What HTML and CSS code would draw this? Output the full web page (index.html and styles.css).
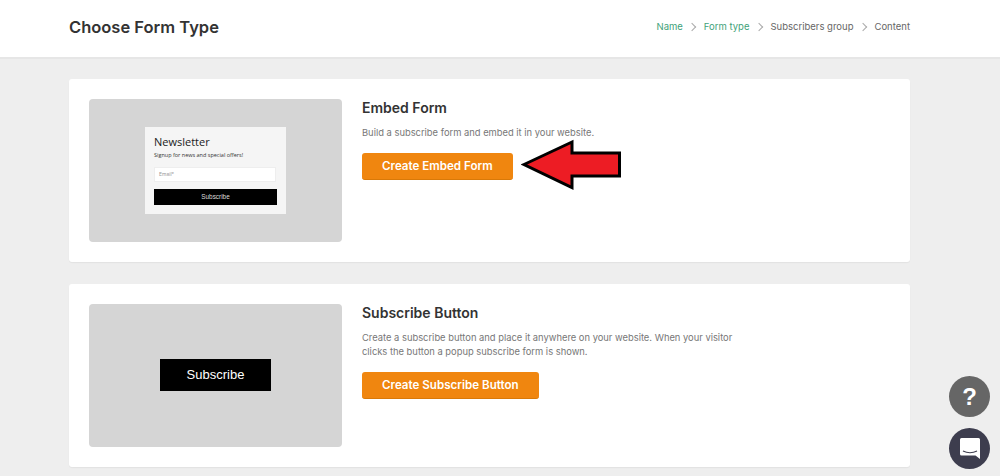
FILE: index.html
```html
<!DOCTYPE html>
<html lang="en">
<head>
<meta charset="utf-8">
<title>Choose Form Type</title>
<link rel="stylesheet" href="styles.css">
</head>
<body>
<header class="header">
  <div class="wrap header-row">
    <h1 class="page-title">Choose Form Type</h1>
    <nav class="steps">
      <span class="step done">Name</span><span class="sep"></span>
      <span class="step done">Form type</span><span class="sep"></span>
      <span class="step">Subscribers group</span><span class="sep"></span>
      <span class="step">Content</span>
    </nav>
  </div>
</header>
<main class="wrap cards">
  <section class="card">
    <div class="thumb">
      <div class="mini-form">
        <div class="mini-title">Newsletter</div>
        <div class="mini-sub">Signup for news and special offers!</div>
        <div class="mini-input">Email*</div>
        <div class="mini-btn">Subscribe</div>
      </div>
    </div>
    <div class="info">
      <h2 class="card-title">Embed Form</h2>
      <p class="card-text">Build a subscribe form and embed it in your website.</p>
      <a class="cta">Create Embed Form</a>
    </div>
    <svg class="arrow" width="101" height="52" viewBox="0 0 101 52"><path d="M3 25.500 L51 3 V14 H98.500 V37 H51 V48.500 Z" fill="#ed1c24" stroke="#000" stroke-width="3"/></svg>
  </section>
  <section class="card">
    <div class="thumb">
      <div class="sub-btn">Subscribe</div>
    </div>
    <div class="info">
      <h2 class="card-title">Subscribe Button</h2>
      <p class="card-text">Create a subscribe button and place it anywhere on your website. When your visitor<br>clicks the button a popup subscribe form is shown.</p>
      <a class="cta">Create Subscribe Button</a>
    </div>
  </section>
</main>
<div class="fab fab-help">?</div>
<div class="fab fab-chat">
  <svg width="20" height="21" viewBox="0 0 20 21"><path d="M1.500 0 H18.500 A1.500 1.500 0 0 1 20 1.500 V21 L15.500 17.500 H1.500 A1.500 1.500 0 0 1 0 16 V1.500 A1.500 1.500 0 0 1 1.500 0 Z" fill="#fff"/><path d="M3 13 Q10 16.500 17 13" fill="none" stroke="#3d3d4e" stroke-width="1.200"/></svg>
</div>
</body>
</html>
```
FILE: styles.css
```css
* { box-sizing: border-box; }
html, body { margin: 0; height: 476px; overflow: hidden; }
body { background: #eee; font-family: "Inter", "Lato", sans-serif; color: #333; }
.wrap { width: 841px; margin-left: 69px; }
.header { background: #fff; height: 59px; border-bottom: 2px solid #e6e6e6; }
.header-row { display: flex; align-items: center; justify-content: space-between; height: 54px; }
.page-title { margin: 0; font-size: 16.500px; font-weight: 600; color: #333; }
.steps { display: flex; align-items: center; font-size: 9.500px; color: #666; padding-bottom: 1px; }
.step.done { color: #3fa27a; }
.sep { display: flex; align-items: center; justify-content: center; width: 21px; height: 12px; }
.sep::after { content: ""; width: 5px; height: 5px; margin-left: -2px; border-top: 1px solid #aaa; border-right: 1px solid #aaa; transform: rotate(45deg); }
.cards { display: flex; flex-direction: column; gap: 22px; padding-top: 20px; }
.card { position: relative; display: flex; gap: 20px; height: 183px; padding: 20px; background: #fff; border-radius: 3px; box-shadow: 0 1px 1px #e2e2e2; }
.thumb { width: 253px; height: 143px; flex: none; display: flex; align-items: center; justify-content: center; background: #d5d5d5; border-radius: 4px; }
.mini-form { width: 141px; height: 87px; background: #f5f5f5; padding: 7px 9px 0; margin-top: -1px; }
.mini-title { font-family: "Open Sans", sans-serif; font-size: 11px; line-height: 16px; color: #222; }
.mini-sub { font-family: "Open Sans", sans-serif; font-size: 5.500px; line-height: 10px; color: #333; }
.mini-input { margin-top: 7px; height: 15px; width: 122px; background: #fff; border: 1px solid #eee; font-size: 5px; line-height: 13px; padding-left: 4px; color: #999; }
.mini-btn { margin-top: 7px; height: 16px; width: 123px; background: #000; color: #ddd; text-align: center; font-family: "Liberation Sans", sans-serif; font-size: 6.400px; line-height: 16px; }
.card-title { margin: 1px 0 0; font-size: 14px; line-height: 16px; font-weight: 600; color: #333; }
.card-text { margin: 10px 0 0; font-size: 9.370px; line-height: 14px; color: #777; }
.cta { display: inline-block; margin-top: 13px; height: 27px; padding: 0 20px; background: #f0860f; border-bottom: 1px solid #d97908; border-radius: 3px; color: #fff; font-size: 11.600px; font-weight: 600; line-height: 26px; }
.arrow { position: absolute; left: 452px; top: 60px; }
.sub-btn { width: 111px; height: 32px; margin-top: -1px; background: #000; color: #fff; text-align: center; font-family: "Liberation Sans", sans-serif; font-size: 13px; line-height: 32px; }
.fab { position: fixed; left: 949px; width: 41px; height: 41px; border-radius: 50%; display: flex; align-items: center; justify-content: center; }
.fab-help { top: 376px; background: #666; color: #fff; font-family: "Liberation Sans", sans-serif; font-weight: 700; font-size: 24px; }
.fab-chat { top: 428px; background: #3d3d4e; }
```
